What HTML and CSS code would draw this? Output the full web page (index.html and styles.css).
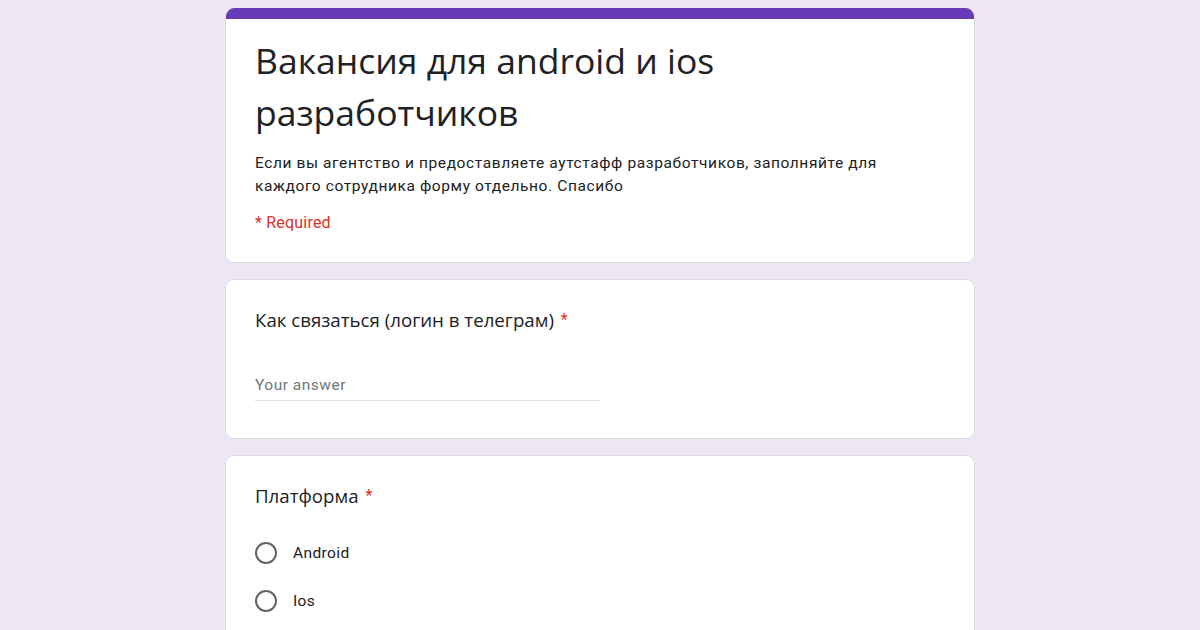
FILE: index.html
```html
<!DOCTYPE html>
<html lang="ru">
<head>
<meta charset="utf-8">
<link rel="stylesheet" href="styles.css">
</head>
<body>
<div class="page">
  <div class="card header">
    <div class="bar"></div>
    <div class="header-body">
      <h1 class="title">Вакансия для android и ios разработчиков</h1>
      <p class="desc">Если вы агентство и предоставляете аутстафф разработчиков, заполняйте для каждого сотрудника форму отдельно. Спасибо</p>
      <p class="required">* Required</p>
    </div>
  </div>
  <div class="card question">
    <div class="q-title">Как связаться (логин в телеграм) <span class="star">*</span></div>
    <div class="answer">Your answer</div>
  </div>
  <div class="card question">
    <div class="q-title">Платформа <span class="star">*</span></div>
    <div class="options">
      <div class="option"><span class="radio"></span><span class="opt-label">Android</span></div>
      <div class="option"><span class="radio"></span><span class="opt-label">Ios</span></div>
    </div>
  </div>
</div>
</body>
</html>
```
FILE: styles.css
```css
html, body {
  margin: 0;
  padding: 0;
}
body {
  background: #ede7f6;
  font-family: Roboto, "Liberation Sans", sans-serif;
  color: #202124;
  height: 630px;
  overflow: hidden;
}
.page {
  width: 750px;
  margin: 8px auto 0;
  display: flex;
  flex-direction: column;
  gap: 16px;
}
.card {
  background: #fff;
  border: 1px solid #dadce0;
  border-radius: 9px;
  overflow: hidden;
}
.header {
  border-top: none;
}
.bar {
  height: 11px;
  background: #673ab7;
}
.header-body {
  padding: 15px 29px 28px;
}
.title {
  margin: 0;
  font-family: "Open Sans", sans-serif;
  font-weight: 400;
  font-size: 35.5px;
  line-height: 52px;
  color: #202124;
  max-width: 560px;
}
.desc {
  margin: 14px 0 0;
  font-size: 15.5px;
  letter-spacing: 0.6px;
  line-height: 23px;
  color: #202124;
  max-width: 640px;
}
.required {
  margin: 13px 0 0;
  font-size: 16px;
  letter-spacing: 0.2px;
  line-height: 23px;
  color: #d93025;
}
.question {
  padding: 28px 29px 37px;
}
.q-title {
  font-family: "Open Sans", sans-serif;
  font-size: 18.7px;
  line-height: 24px;
  color: #202124;
}
.star {
  font-family: Roboto, sans-serif;
  font-size: 16px;
  vertical-align: 2px;
  margin-left: 2px;
  color: #d93025;
}
.answer {
  margin-top: 43px;
  width: 345px;
  font-size: 15.5px;
  letter-spacing: 0.5px;
  line-height: 20px;
  padding-bottom: 5px;
  border-bottom: 1px solid #e0e0e0;
  color: #70757a;
}
.options {
  margin-top: 21px;
  display: flex;
  flex-direction: column;
}
.option {
  display: flex;
  align-items: center;
  height: 48px;
  gap: 16px;
}
.radio {
  width: 18px;
  height: 18px;
  border: 2px solid #5f6368;
  border-radius: 50%;
}
.opt-label {
  font-size: 15.5px;
  letter-spacing: 0.4px;
  color: #202124;
}
```
